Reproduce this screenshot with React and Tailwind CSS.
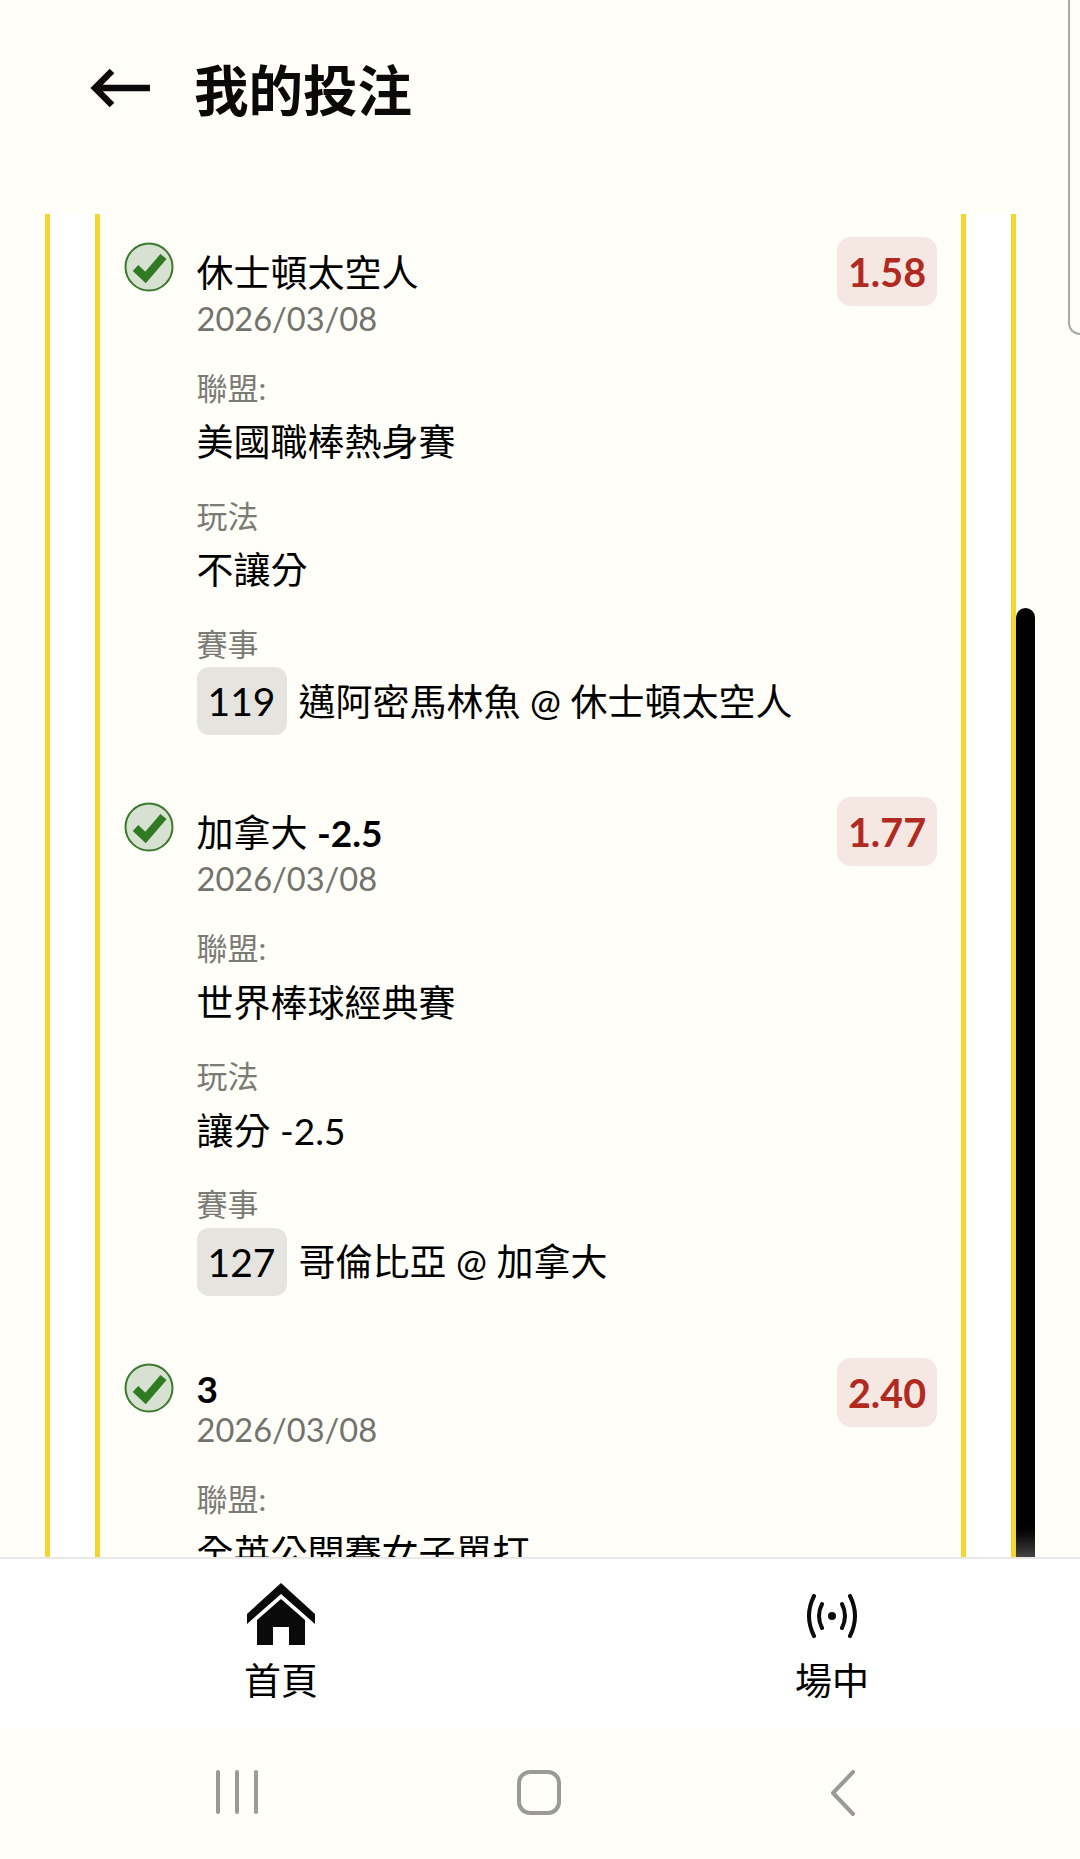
import React from "react";

const bets = [
  { title: "休士頓太空人", date: "2026/03/08", odds: "1.58", league: "美國職棒熱身賽", play: "不讓分", no: "119", game: "邁阿密馬林魚 @ 休士頓太空人" },
  { title: "加拿大", bold: "-2.5", date: "2026/03/08", odds: "1.77", league: "世界棒球經典賽", play: "讓分 -2.5", no: "127", game: "哥倫比亞 @ 加拿大" },
  { bold: "3", date: "2026/03/08", odds: "2.40", league: "全英公開賽女子單打" },
];

function CheckIcon() {
  return (
    <svg width="50" height="50" viewBox="0 0 50 50" className="shrink-0">
      <circle cx="25" cy="25" r="23.5" fill="#d6e1d1" stroke="#3b7a2f" strokeWidth="2" />
      <path d="M11.5 26 L21.5 35.5 L39.5 14.5" fill="none" stroke="#2f7a22" strokeWidth="8" />
    </svg>
  );
}

function BetRow({ bet }) {
  return (
    <div className="flex pt-[28px] pb-[39px] pl-[24px] pr-[24px]">
      <div className="w-[72.5px] shrink-0">
        <CheckIcon />
      </div>
      <div className="flex-1 min-w-0 pt-[4px]">
        <div className="flex justify-between items-start">
          <div>
            <div className={bet.title ? "text-[37px] leading-[54px] text-black" : "text-[37px] leading-[44px] text-black"}>
              {bet.title}
              {bet.title && bet.bold ? " " : ""}
              {bet.bold && <span className="font-bold">{bet.bold}</span>}
            </div>
            <div className="-mt-[5px] text-[32.6px] text-[#72726e]">{bet.date}</div>
          </div>
          <div className="-mt-[9px] w-[100px] h-[69px] rounded-[14px] bg-[#f5e7e1] text-[#b12a22] text-[39.5px] font-bold flex items-center justify-center">
            {bet.odds}
          </div>
        </div>
        <div className="mt-[21px] text-[31px] text-[#7b7b76]">聯盟:</div>
        <div className="mt-[3px] text-[37px] text-black whitespace-nowrap">{bet.league}</div>
        {bet.play && (
          <>
            <div className="mt-[23px] text-[31px] text-[#7b7b76]">玩法</div>
            <div className="mt-[3px] text-[37px] text-black">{bet.play}</div>
            <div className="mt-[23px] text-[31px] text-[#7b7b76]">賽事</div>
            <div className="flex items-center gap-[12px] text-[37px] text-black">
              <span className="h-[68px] w-[90px] rounded-[12px] bg-[#e6e4df] text-[39px] flex items-center justify-center">{bet.no}</span>
              <span>{bet.game}</span>
            </div>
          </>
        )}
      </div>
    </div>
  );
}

export default function App() {
  return (
    <div className="relative h-[1859px] w-[1080px] flex flex-col overflow-hidden bg-[#fffef8] [font-family:Lato,'Noto_Sans_CJK_TC',sans-serif]">
      {/* header */}
      <div className="h-[214px] shrink-0 flex items-start pt-[56px] pl-[90px]">
        <svg width="60" height="40" viewBox="0 0 60 40" className="mt-[12px]">
          <path d="M60 20 H6 M22 3 L5 20 L22 37" fill="none" stroke="#0a0a0a" strokeWidth="6.5" />
        </svg>
        <div className="-mt-[6px] ml-[44px] text-[54.5px] font-bold text-[#0a0a0a]">我的投注</div>
      </div>

      {/* list */}
      <div className="flex-1 min-h-0 overflow-hidden">
        <div className="ml-[45px] w-[971px] h-full bg-white border-x-[5px] border-[#f7d530] px-[45px]">
          <div className="h-full bg-[#fffef8] border-x-[5px] border-[#f7d530] overflow-hidden">
            {bets.map((bet) => (
              <BetRow key={bet.odds} bet={bet} />
            ))}
          </div>
        </div>
      </div>

      {/* scrollbar + edge handle */}
      <div className="absolute left-[1016px] top-[608px] w-[19px] h-[949px] rounded-t-[10px] bg-gradient-to-b from-black from-[96%] to-[#444]" />
      <div className="absolute left-[1068px] -top-[4px] w-[20px] h-[339px] rounded-bl-[12px] border-l-2 border-b-2 border-[#aaaaaa]" />

      {/* bottom nav */}
      <div className="h-[171px] shrink-0 bg-white border-t-2 border-[#e8e8e8] flex justify-between pl-[245px] pr-[212px] pt-[24px]">
        <div className="w-[72px] flex flex-col items-center">
          <svg width="68" height="62" viewBox="0 0 68 62" className="shrink-0">
            <path d="M34 0 L68 31 V41 L34 11 L0 41 V31 Z" fill="#0a0a0a" />
            <path d="M34 16 L58 37 V62 H42 V44 H26 V62 H10 V37 Z" fill="#0a0a0a" />
          </svg>
          <div className="mt-[13px] text-[37px] leading-[46px] text-black whitespace-nowrap">首頁</div>
        </div>
        <div className="w-[72px] flex flex-col items-center">
          <svg width="52" height="44" viewBox="0 0 52 44" className="mt-[11px] shrink-0">
            <circle cx="26" cy="22" r="4" fill="#0a0a0a" />
            <path d="M16 10 Q10 22 16 34 M36 10 Q42 22 36 34 M8 2 Q-2 22 8 42 M44 2 Q54 22 44 42" fill="none" stroke="#0a0a0a" strokeWidth="4" strokeLinecap="round" />
          </svg>
          <div className="mt-[20px] text-[37px] leading-[46px] text-black whitespace-nowrap">場中</div>
        </div>
      </div>

      {/* system nav */}
      <div className="h-[131px] shrink-0 flex items-start pt-[42px] pl-[216px]">
        <svg width="44" height="44" viewBox="0 0 44 44">
          <path d="M2 2 V42 M21 2 V42 M40 2 V42" stroke="#9a9a96" strokeWidth="4" strokeLinecap="round" />
        </svg>
        <div className="ml-[257px] w-[44px] h-[45px] rounded-[13px] border-[4px] border-[#9a9a96]" />
        <svg width="26" height="46" viewBox="0 0 26 46" className="ml-[269px]">
          <path d="M23 2 L3 23 L23 44" fill="none" stroke="#9a9a96" strokeWidth="4" strokeLinecap="round" strokeLinejoin="round" />
        </svg>
      </div>
    </div>
  );
}
